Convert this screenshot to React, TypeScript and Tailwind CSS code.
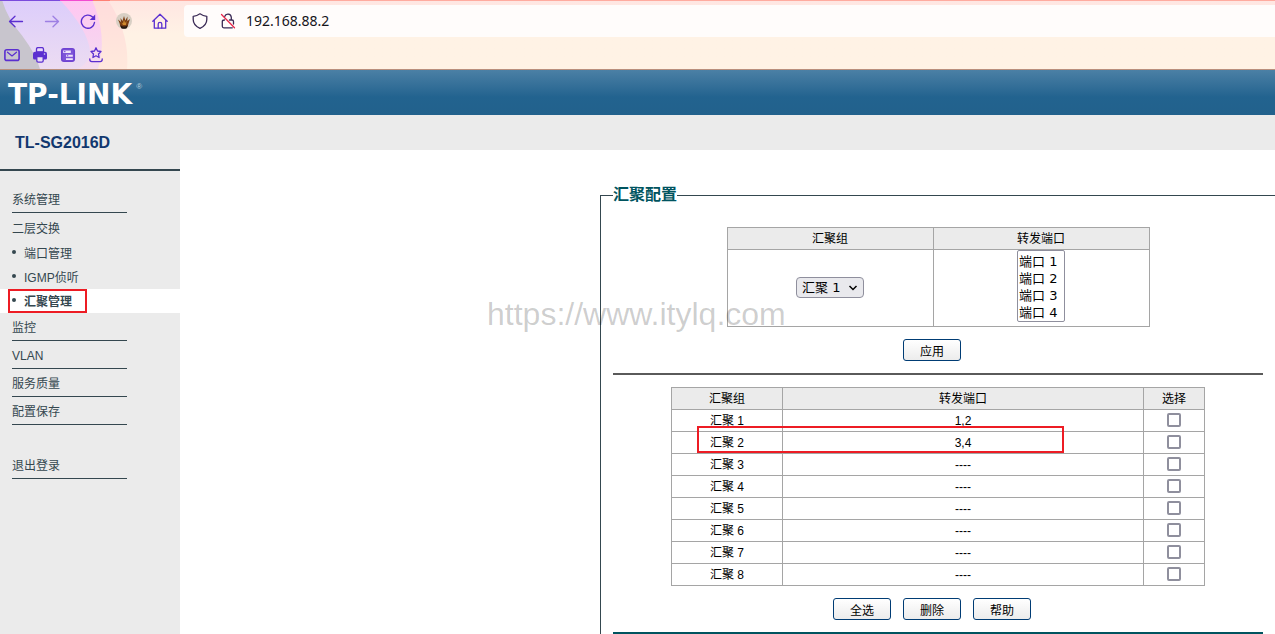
import type { ReactNode } from 'react'

const groups = ['1,2', '3,4', '----', '----', '----', '----', '----', '----']

const cell = 'border border-[#a5a5a5] p-0 font-normal'
const toolIcon = 'size-4 shrink-0'

function ThemeArt() {
  return (
    <svg className="absolute left-0 top-0 h-full w-32" viewBox="0 0 128 70" preserveAspectRatio="none" aria-hidden="true">
      <defs>
        <linearGradient id="peach" x1="0" x2="0" y1="0" y2="1">
          <stop offset="0" stopColor="#ffdcdc" />
          <stop offset="1" stopColor="#ffe9dc" />
        </linearGradient>
        <linearGradient id="pink" x1="0" x2="0" y1="0" y2="1">
          <stop offset="0" stopColor="#ffc6f2" />
          <stop offset="1" stopColor="#f3dcee" />
        </linearGradient>
        <linearGradient id="lilac" x1="0" x2="0" y1="0" y2="1">
          <stop offset="0" stopColor="#dccdfb" />
          <stop offset="1" stopColor="#ecdcf2" />
        </linearGradient>
      </defs>
      <path d="M0 0H108Q130 34 127 70H0Z" fill="url(#peach)" />
      <path d="M0 0H92Q108 36 98 70H0Z" fill="url(#pink)" />
      <path d="M0 0H60Q88 30 90 52Q91 62 78 70H0Z" fill="url(#lilac)" />
      <path d="M0 0H2Q8 20 22 36Q36 55 40 70H0Z" fill="#c8c5cd" />
      <path d="M0 0H60V1H0Z" fill="#7a4bdc" />
      <path d="M60 0H93V1H60Z" fill="#f24bd0" />
      <path d="M93 0H110V1H93Z" fill="#ff7f73" />
      <path d="M110 0H128V1H110Z" fill="#ffab9f" />
    </svg>
  )
}

function BrowserBar() {
  return (
    <header className="relative h-[70px] overflow-hidden border-b border-[#b98f7d] bg-linear-to-b from-[#ffe6e2] to-[#fff2e5] to-50%">
      <div className="absolute inset-x-0 top-0 h-px bg-[#ffab9f]" />
      <ThemeArt />
      <div className="relative flex h-[37px] items-center pl-2 pt-[5px]">
        <nav className="flex items-center gap-5 pr-4 text-[#5b2fd0]">
          <button type="button" aria-label="后退">
            <svg className={toolIcon} viewBox="0 0 16 16" fill="none" stroke="currentColor" strokeWidth="1.3" strokeLinecap="round" strokeLinejoin="round">
              <path d="M14.5 8.500H1.5M7 3.200 1.5 8.500 7 13.800" />
            </svg>
          </button>
          <button type="button" aria-label="前进" className="opacity-50">
            <svg className={toolIcon} viewBox="0 0 16 16" fill="none" stroke="currentColor" strokeWidth="1.3" strokeLinecap="round" strokeLinejoin="round">
              <path d="M1.5 8.500h13M9 3.200 14.5 8.500 9 13.800" />
            </svg>
          </button>
          <button type="button" aria-label="刷新">
            <svg className={toolIcon} viewBox="0 0 16 16" fill="none" stroke="currentColor" strokeWidth="1.4" strokeLinecap="round">
              <path d="M14.500 9.500A6.600 6.600 0 1 1 12.600 4" />
              <path d="M15.200 1.500v5.500H9.700Z" fill="currentColor" stroke="none" />
            </svg>
          </button>
          <button type="button" aria-label="扩展">
            <svg className={toolIcon} viewBox="0 0 16 16">
              <circle cx="8" cy="8" r="8" fill="#d8cfc4" />
              <path d="M2 6.500 5 9l-.500-4 2 3L8 3l1.300 4.500L11.500 3.500 11.300 8 14 6l-1.500 4.500-1 3.500q-3.500 2.500-7 0L3.500 10Z" fill="#7a3d12" />
              <path d="M5.500 9.500 7 10.500 8 6.500l1 3.500L10.500 8l-.500 4H7Z" fill="#d08a2c" />
              <path d="M4.300 12q3.700 3 7.400 0l-1 3.300q-2.700 1-5.400 0Z" fill="#241710" />
            </svg>
          </button>
          <button type="button" aria-label="主页">
            <svg className={toolIcon} viewBox="0 0 16 16" fill="none" stroke="currentColor" strokeWidth="1.3" strokeLinejoin="round" strokeLinecap="round">
              <path d="M.8 8.200 8 1.200l7.200 7M2.300 7v8.200h11.400V7" />
              <path d="M6.200 15V11q0-1.700 1.800-1.700t1.800 1.700v4" />
            </svg>
          </button>
        </nav>
        <div className="flex h-8 min-w-0 flex-1 items-center rounded-l bg-[#fffcfb] pl-2 text-[#3a2a55]">
          <svg className={toolIcon} viewBox="0 0 16 16" fill="none" stroke="currentColor" strokeWidth="1.3" strokeLinejoin="round">
            <path d="M8 .8Q11 3 14.800 3.300v3.200q0 5.800-6.800 8.800Q1.200 12.300 1.200 6.500V3.300Q5 3 8 .8Z" />
          </svg>
          <svg className="ml-3 size-4 shrink-0" viewBox="0 0 16 16" fill="none" stroke="currentColor" strokeWidth="1.3" strokeLinecap="round">
            <path d="M4.700 3.500A3.400 3.400 0 0 1 11.300 4.200v2.500M9.500 7h2.500q1.500 0 1.500 1.500v2.500M4.500 7Q2.300 7 2.300 8.500v4.800q0 1.500 1.500 1.500h8.500" />
            <path d="M1.500 1.500l13 13.300" stroke="#e8264a" />
          </svg>
          <input
            aria-label="地址"
            defaultValue="192.168.88.2"
            className="ml-2.5 min-w-0 flex-1 bg-transparent font-['Noto_Sans',sans-serif] text-sm text-[#15141a] outline-none"
          />
        </div>
      </div>
      <div className="relative flex items-center gap-3 pl-1 pt-2.5 text-[#5b2fd0]">
        <button type="button" aria-label="邮件">
          <svg className={toolIcon} viewBox="0 0 16 16" fill="none" stroke="currentColor" strokeWidth="1.6" strokeLinejoin="round">
            <rect x=".9" y="2.800" width="14.200" height="10.600" rx="2" />
            <path d="M3.500 5.200 8 9l4.500-3.800" strokeWidth="1.200" strokeLinecap="round" />
          </svg>
        </button>
        <button type="button" aria-label="打印">
          <svg className={toolIcon} viewBox="0 0 16 16" fill="currentColor">
            <path d="M4.500 5V2.200Q4.500.6 6 .6h4Q11.500.6 11.500 2.200V5Z" fill="#ead9fb" stroke="currentColor" strokeWidth="1.300" />
            <path d="M3 4.700h10q2 0 2 2V11q0 1.500-1.500 1.500h-11Q1 12.500 1 11V6.700q0-2 2-2Z" />
            <path d="M4.800 9.600h6.400v4.200q0 1.400-1.400 1.400H6.200q-1.400 0-1.400-1.400Z" fill="#e9def5" stroke="currentColor" strokeWidth="1.300" />
            <circle cx="12.500" cy="7" r=".8" fill="#e9def5" />
          </svg>
        </button>
        <button type="button" aria-label="侧栏">
          <svg className={toolIcon} viewBox="0 0 16 16" fill="none" stroke="#6f43d2" strokeWidth="1.500">
            <rect x="1.700" y="1.700" width="12.600" height="12.600" rx="2.200" fill="#7d54d8" />
            <path d="M3.200 3.600h7.600v2.300H3.200ZM6 7.700h6.800v2.100H6ZM6 11.200h6.800v1.700H6Z" fill="#efe4fa" stroke="none" />
            <path d="M4 4.700h1.500M6.800 8.800h1.500" strokeWidth="1" />
          </svg>
        </button>
        <button type="button" aria-label="书签">
          <svg className={toolIcon} viewBox="0 0 16 16" fill="none" stroke="currentColor" strokeWidth="1.300" strokeLinejoin="round" strokeLinecap="round">
            <path d="m8 .8 1.500 3.200 3.500.500-2.500 2.500.6 3.500L8 8.800l-3.100 1.700.6-3.500L3 4.500 6.500 4Z" />
            <path d="M1.800 11.800v.8q0 2 2 2h8.400q2 0 2-2v-.8" />
          </svg>
        </button>
      </div>
    </header>
  )
}

function MenuItem({ children, line = true }: { children: ReactNode; line?: boolean }) {
  return (
    <a
      href="#"
      className={`ml-3 flex h-7 w-[115px] items-center pt-[3px] ${line ? 'border-b border-[#34474f]' : ''}`}
    >
      {children}
    </a>
  )
}

function SubItem({ children, active = false }: { children: ReactNode; active?: boolean }) {
  return (
    <a href="#" className={`relative flex h-6 items-center pl-3 pt-0.5 ${active ? 'bg-white font-bold' : ''}`}>
      <span className="mb-1 mr-2 size-1 rounded-full bg-[#34474f]" />
      {children}
      {active && <span className="absolute inset-y-0 left-2 w-[79px] border-2 border-[#ed1c24]" />}
    </a>
  )
}

function Sidebar() {
  return (
    <aside className="w-[180px] shrink-0 text-xs text-[#34474f]">
      <h1 className="flex h-14 items-center border-b-2 border-[#34474f] pl-[15px] pt-0.5 text-base font-bold text-[#12386f]">
        TL-SG2016D
      </h1>
      <nav className="pt-3.5">
        <MenuItem>系统管理</MenuItem>
        <MenuItem line={false}>二层交换</MenuItem>
        <SubItem>端口管理</SubItem>
        <SubItem>IGMP侦听</SubItem>
        <SubItem active>汇聚管理</SubItem>
        <MenuItem>监控</MenuItem>
        <MenuItem>VLAN</MenuItem>
        <MenuItem>服务质量</MenuItem>
        <MenuItem>配置保存</MenuItem>
        <div className="pt-[26px]">
          <MenuItem>退出登录</MenuItem>
        </div>
      </nav>
    </aside>
  )
}

function ActionButton({ children }: { children: ReactNode }) {
  return (
    <button
      type="button"
      className="mr-3 h-[22px] w-[58px] rounded-[3px] border border-[#003c74] bg-linear-to-b from-white to-[#ececec] pt-0.5 text-xs leading-5"
    >
      {children}
    </button>
  )
}

function ConfigTable() {
  return (
    <table className="mx-auto w-[423px] table-fixed border-collapse text-center">
      <thead>
        <tr className="h-[22px] bg-[#ebebeb]">
          <th className={`${cell} w-[206px]`}>
            <label htmlFor="group">汇聚组</label>
          </th>
          <th className={cell}>
            <label htmlFor="ports">转发端口</label>
          </th>
        </tr>
      </thead>
      <tbody>
        <tr className="h-[77px]">
          <td className={cell}>
            <div className="relative mx-auto mb-0.5 w-[68px]">
              <select
                id="group"
                className="block h-[21px] w-full appearance-none rounded border border-[#8f8f9d] bg-[#e9e9ed] pl-[5px] font-['DejaVu_Sans','Noto_Sans_CJK_SC',sans-serif] text-[13px] leading-[19px]"
              >
                {groups.map((_, i) => (
                  <option key={i}>汇聚 {i + 1}</option>
                ))}
              </select>
              <svg className="pointer-events-none absolute right-1.5 top-[7px] h-2 w-2.5" viewBox="0 0 10 8" fill="none" stroke="black" strokeWidth="1.500">
                <path d="M1.500 2 5 5.500 8.500 2" />
              </svg>
            </div>
          </td>
          <td className={`${cell} align-top`}>
            <select
              id="ports"
              multiple
              size={4}
              className="mx-auto block h-[72px] w-12 overflow-hidden rounded-xs border border-[#8f8f9d] bg-white font-['DejaVu_Sans','Noto_Sans_CJK_SC',sans-serif] text-[13px]"
            >
              {[1, 2, 3, 4].map((n) => (
                <option key={n} className="h-[17px] min-h-0 p-0 pl-px leading-[17px]">
                  端口 {n}
                </option>
              ))}
            </select>
          </td>
        </tr>
      </tbody>
    </table>
  )
}

function GroupTable() {
  return (
    <div className="relative mx-auto w-[534px]">
      <table className="w-full table-fixed border-collapse text-center">
        <thead>
          <tr className="h-[22px] bg-[#ebebeb]">
            <th className={`${cell} w-[111px]`}>汇聚组</th>
            <th className={cell}>转发端口</th>
            <th className={`${cell} w-[61px]`}>选择</th>
          </tr>
        </thead>
        <tbody>
          {groups.map((ports, i) => (
            <tr key={i} className="h-[22px]">
              <td className={cell}>汇聚 {i + 1}</td>
              <td className={cell}>{ports}</td>
              <td className={cell}>
                <input
                  type="checkbox"
                  aria-label={`汇聚 ${i + 1}`}
                  className="mx-auto mb-0.5 block size-3.5 appearance-none rounded-xs border-2 border-[#8f8f9d] bg-white checked:bg-[#0061e0]"
                />
              </td>
            </tr>
          ))}
        </tbody>
      </table>
      <span className="absolute left-[26px] top-[39px] h-[27px] w-[367px] border-2 border-[#ed1c24]" />
    </div>
  )
}

export default function App() {
  return (
    <div className="flex min-h-screen flex-col overflow-hidden bg-[#ebebeb] font-['Liberation_Sans','Noto_Sans_CJK_SC',sans-serif] text-black">
      <BrowserBar />
      <div className="flex h-[45px] items-center bg-linear-to-b from-[#4b80a5] via-[#22638f] via-60% to-[#22618c] pl-2 pt-1 text-white">
        <span className="font-['DejaVu_Sans',sans-serif] text-[28px] font-bold leading-none">TP-LINK</span>
        <span className="mb-4 ml-1 text-[8px] leading-none text-[#b5cddd]">®</span>
      </div>
      <div className="flex flex-1">
        <Sidebar />
        <div className="flex min-w-0 flex-1 flex-col pt-[35px]">
          <main className="relative flex flex-1 flex-col bg-white pt-[33px] text-xs">
            <fieldset className="ml-auto w-[675px] flex-1 border-l border-t border-[#34474f] px-3">
              <legend className="h-6 text-base font-bold text-[#00545f]">汇聚配置</legend>
              <div className="pt-5">
                <ConfigTable />
                <div className="flex justify-center py-3">
                  <ActionButton>应用</ActionButton>
                </div>
                <hr className="mb-3 border-t-2 border-[#5a5a5a]" />
                <GroupTable />
                <div className="flex justify-center py-3">
                  <ActionButton>全选</ActionButton>
                  <ActionButton>删除</ActionButton>
                  <ActionButton>帮助</ActionButton>
                </div>
                <hr className="border-t-2 border-[#00545f]" />
              </div>
            </fieldset>
            <span className="pointer-events-none absolute left-[307px] top-[146px] text-[32px] leading-9 text-black/20">
              https://www.itylq.com
            </span>
          </main>
        </div>
      </div>
    </div>
  )
}
